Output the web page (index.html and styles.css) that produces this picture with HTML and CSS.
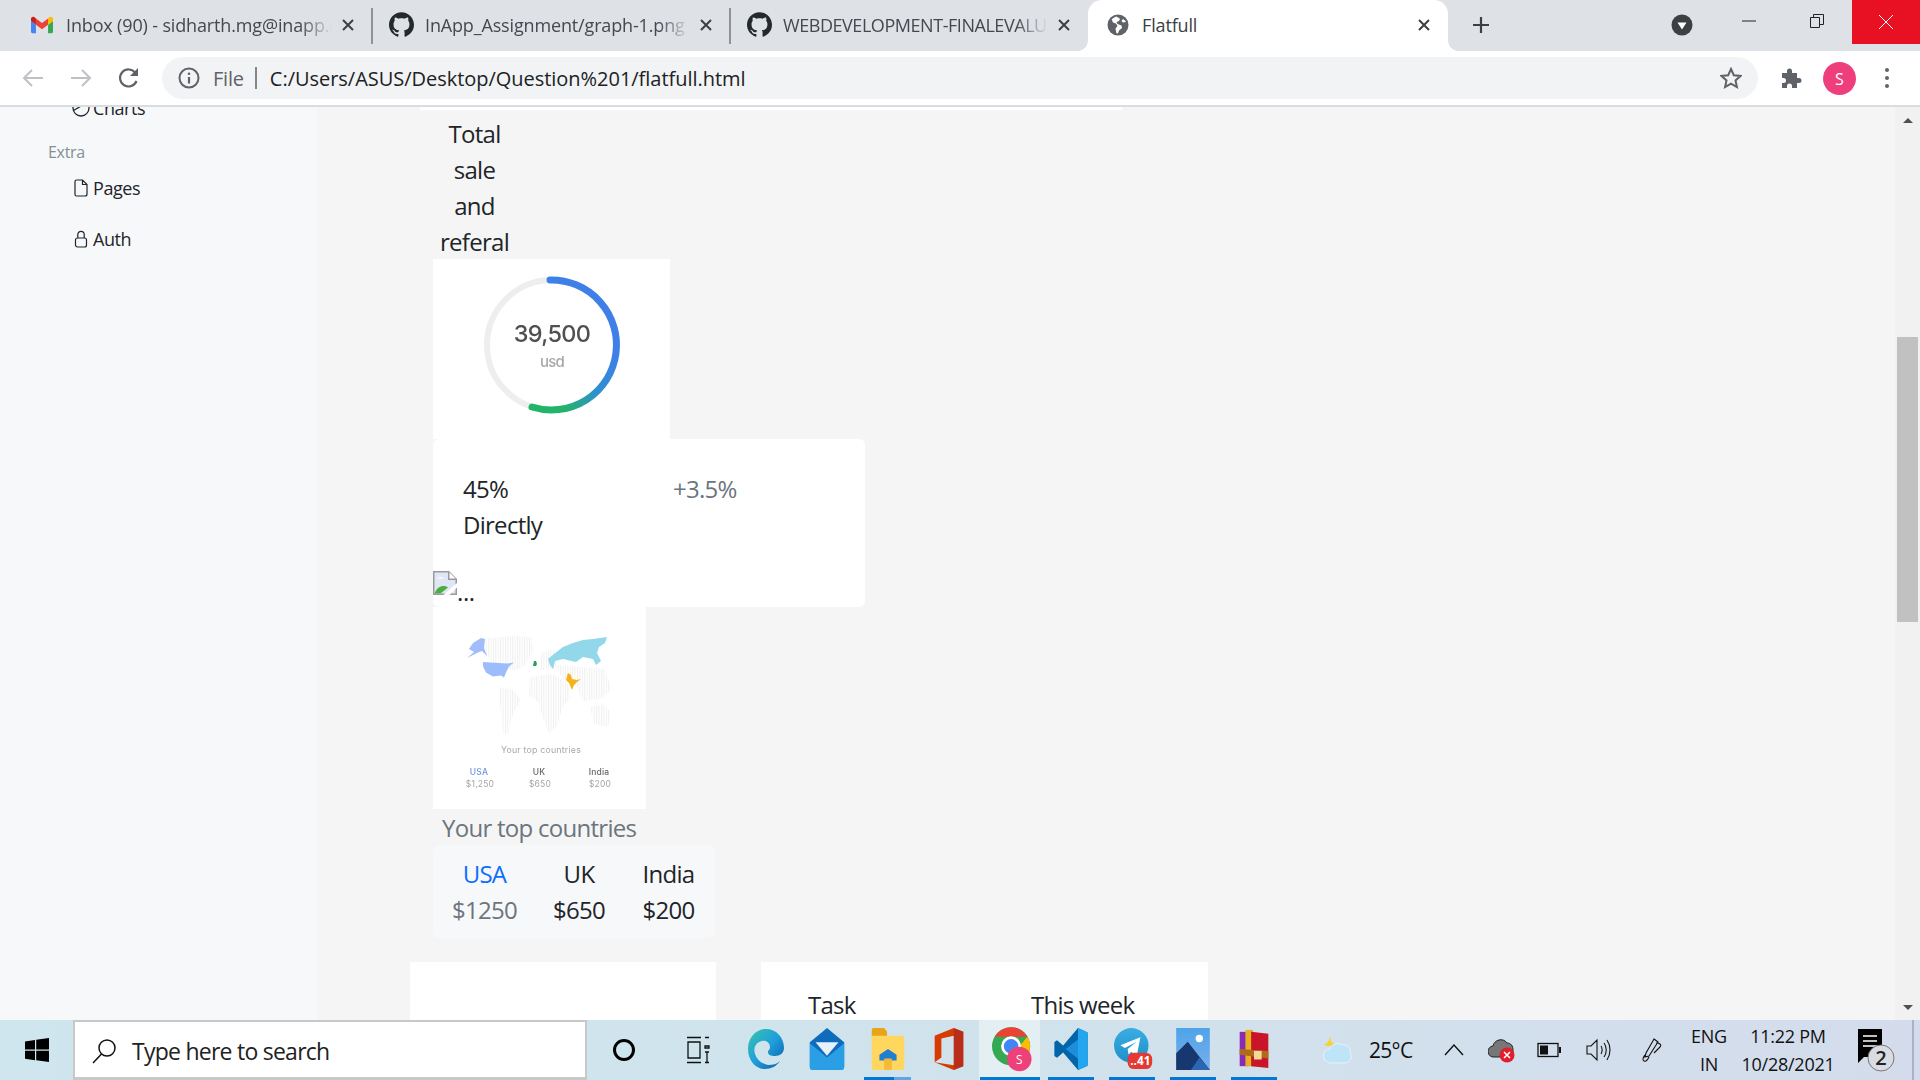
FILE: index.html
```html
<!DOCTYPE html>
<html lang="en">
<head>
<meta charset="utf-8">
<title>Flatfull</title>
<link rel="stylesheet" href="styles.css">
</head>
<body>
<svg class="defs" width="0" height="0" aria-hidden="true">
  <defs>
    <symbol id="gh" viewBox="0 0 24 24"><path fill="#24292e" d="M12 .297c-6.63 0-12 5.373-12 12 0 5.303 3.438 9.8 8.205 11.385.6.113.82-.258.82-.577 0-.285-.01-1.04-.015-2.04-3.338.724-4.042-1.61-4.042-1.61C4.422 18.07 3.633 17.7 3.633 17.7c-1.087-.744.084-.729.084-.729 1.205.084 1.838 1.236 1.838 1.236 1.07 1.835 2.809 1.305 3.495.998.108-.776.417-1.305.76-1.605-2.665-.3-5.466-1.332-5.466-5.93 0-1.31.465-2.38 1.235-3.22-.135-.303-.54-1.523.105-3.176 0 0 1.005-.322 3.3 1.23.96-.267 1.98-.399 3-.405 1.02.006 2.04.138 3 .405 2.28-1.552 3.285-1.23 3.285-1.23.645 1.653.24 2.873.12 3.176.765.84 1.23 1.91 1.23 3.22 0 4.61-2.805 5.625-5.475 5.92.42.36.81 1.096.81 2.22 0 1.606-.015 2.896-.015 3.286 0 .315.21.69.825.57C20.565 22.092 24 17.592 24 12.297c0-6.627-5.373-12-12-12"/></symbol>
    <symbol id="x" viewBox="0 0 14 14"><path d="M2 2l10 10M12 2L2 12" stroke="#3c4043" stroke-width="2" fill="none"/></symbol>
    <pattern id="hatch" width="2.4" height="4" patternUnits="userSpaceOnUse"><rect width="1" height="4" fill="#efefef"/></pattern>
    <linearGradient id="ring" gradientUnits="userSpaceOnUse" x1="180" y1="95" x2="110" y2="150"><stop offset="0" stop-color="#3f80e8"/><stop offset=".4" stop-color="#2e8fd0"/><stop offset=".8" stop-color="#23b36c"/><stop offset="1" stop-color="#22b56a"/></linearGradient>
    <linearGradient id="edge" x1="0" y1="0" x2="1" y2="1"><stop offset="0" stop-color="#38c6a8"/><stop offset=".5" stop-color="#1f9fdc"/><stop offset="1" stop-color="#0c59a4"/></linearGradient>
    <linearGradient id="tg" x1="0" y1="0" x2="0" y2="1"><stop offset="0" stop-color="#39aee3"/><stop offset="1" stop-color="#1f8fc9"/></linearGradient>
    <linearGradient id="ph" x1="0" y1="0" x2="0" y2="1"><stop offset="0" stop-color="#4ea4ea"/><stop offset="1" stop-color="#7aaeea"/></linearGradient>
  </defs>
</svg>

<div class="window">
  <header class="tabstrip">
    <div class="tab">
      <svg class="fav" viewBox="0 0 24 18"><path fill="#4285f4" d="M1.6 18H5.4V8.8L0 4.7v11.7C0 17.3.7 18 1.6 18z"/><path fill="#34a853" d="M18.6 18h3.8c.9 0 1.6-.7 1.6-1.6V4.7l-5.4 4.1z"/><path fill="#fbbc04" d="M18.6 1.8v7L24 4.7V2.5c0-2-2.300-3.200-3.900-2z"/><path fill="#ea4335" d="M5.400 8.800v-7L12 6.800l6.600-5v7L12 13.700z"/><path fill="#c5221f" d="M0 2.500v2.200l5.400 4.100v-7L3.900.6C2.300-.6 0 .5 0 2.500z"/></svg>
      <span class="title">Inbox (90) - sidharth.mg@inapp.co</span>
      <svg class="close"><use href="#x"/></svg>
    </div>
    <i class="tabsep"></i>
    <div class="tab">
      <svg class="fav gh"><use href="#gh"/></svg>
      <span class="title">InApp_Assignment/graph-1.png at main</span>
      <svg class="close"><use href="#x"/></svg>
    </div>
    <i class="tabsep"></i>
    <div class="tab">
      <svg class="fav gh"><use href="#gh"/></svg>
      <span class="title caps">WEBDEVELOPMENT-FINALEVALUATION</span>
      <svg class="close"><use href="#x"/></svg>
    </div>
    <div class="tab active">
      <svg class="fav globe" viewBox="0 0 22 22"><circle cx="11" cy="11" r="10.500" fill="#5f6368"/><path fill="#fff" d="M9.500 2.500c-2 .5-3.500 1.500-4.800 3l1.300 3 3 1 1.500 2.500-2 2.500.8 4.500 1.700.5 1-3 3-2.500-.5-2.500-4-1.500-1-2 2.500-1 1-2.300zM16 5l-1.500 2 1.500 1.500 3-.5c-.7-1.200-1.700-2.200-3-3z"/></svg>
      <span class="title">Flatfull</span>
      <svg class="close"><use href="#x"/></svg>
    </div>
    <div class="newtab"><svg viewBox="0 0 18 18"><path d="M9 1v16M1 9h16" stroke="#3c4043" stroke-width="2.200" fill="none"/></svg></div>
    <div class="strip-space"></div>
    <div class="search-tabs"><svg viewBox="0 0 22 22"><circle cx="11" cy="11" r="10.500" fill="#3c4043"/><path d="M6.500 8.500h9L11 15.500z" fill="#fff"/></svg></div>
    <div class="winbtn"><svg viewBox="0 0 16 16"><path d="M1 8h14" stroke="#222" fill="none"/></svg></div>
    <div class="winbtn"><svg viewBox="0 0 16 16"><path d="M1.500 4.500h9v10h-9zM4.500 4.500v-3h10v10h-4" stroke="#222" fill="none"/></svg></div>
    <div class="winbtn winclose"><svg viewBox="0 0 16 16"><path d="M1 1l14 14M15 1L1 15" stroke="#fff" fill="none"/></svg></div>
  </header>

  <nav class="toolbar">
    <div class="navbtn"><svg viewBox="0 0 22 22"><path d="M21 11H2M10 3l-8 8 8 8" stroke="#bdc1c6" stroke-width="2" fill="none"/></svg></div>
    <div class="navbtn"><svg viewBox="0 0 22 22"><path d="M1 11h19M12 3l8 8-8 8" stroke="#bdc1c6" stroke-width="2" fill="none"/></svg></div>
    <div class="navbtn"><svg viewBox="0 0 22 22"><path d="M18.500 14a8.500 8.500 0 1 1-1.200-8.200" stroke="#5f6368" stroke-width="2.200" fill="none"/><path d="M20 1v8h-8z" fill="#5f6368"/></svg></div>
    <div class="omnibox">
      <svg class="info" viewBox="0 0 22 22"><circle cx="11" cy="11" r="9.500" stroke="#5f6368" stroke-width="2" fill="none"/><path d="M11 10v6.500" stroke="#5f6368" stroke-width="2.200"/><circle cx="11" cy="6.800" r="1.300" fill="#5f6368"/></svg>
      <span class="scheme">File</span>
      <i class="omnisep"></i>
      <span class="url">C:/Users/ASUS/Desktop/Question%201/flatfull.html</span>
      <svg class="star" viewBox="0 0 22 22"><path d="M11 2l2.800 6.200 6.700.7-5 4.500 1.400 6.600L11 16.600 5.100 20l1.400-6.600-5-4.500 6.700-.7z" stroke="#5f6368" stroke-width="2" fill="none"/></svg>
    </div>
    <div class="extbtn"><svg viewBox="0 0 22 22"><path fill="#5f6368" d="M2 6h5V4a2.500 2.500 0 0 1 5 0v2h5v5h2a2.500 2.500 0 0 1 0 5h-2v5H12v-2a2.500 2.500 0 0 0-5 0v2H2v-5h1.500a2.500 2.500 0 0 0 0-5H2z"/></svg></div>
    <div class="avatar">S</div>
    <div class="menubtn"><i></i><i></i><i></i></div>
  </nav>

  <div class="viewport">
    <aside class="sidebar">
      <div class="side-item side-charts">
        <svg class="side-ico wide" viewBox="0 0 18 18"><circle cx="9" cy="9" r="8" stroke="#212529" stroke-width="1.300" fill="none"/><path d="M1.500 11.500L15 3.500" stroke="#212529" stroke-width="1.300"/></svg>
        <span>Charts</span>
      </div>
      <div class="side-head">Extra</div>
      <div class="side-item">
        <svg class="side-ico" viewBox="0 0 14 18"><path d="M2.500 1h6l4.500 4.500V15a2 2 0 0 1-2 2H2.500a1.500 1.500 0 0 1-1.500-1.500v-13A1.500 1.500 0 0 1 2.500 1zM8.500 1v4.500H13" stroke="#212529" stroke-width="1.200" fill="none"/></svg>
        <span>Pages</span>
      </div>
      <div class="side-item">
        <svg class="side-ico" viewBox="0 0 14 18"><rect x="1.500" y="8" width="11" height="9" rx="2" stroke="#212529" stroke-width="1.200" fill="none"/><path d="M3.800 8V4.500a3.200 3.200 0 0 1 6.400 0V8" stroke="#212529" stroke-width="1.200" fill="none"/></svg>
        <span>Auth</span>
      </div>
    </aside>

    <main class="main">
      <div class="strip-card"></div>
      <div class="heading">Total sale and referal</div>

      <svg class="donut" viewBox="0 0 237 180">
        <rect width="237" height="180" fill="#fff"/>
        <circle cx="119" cy="86" r="65" fill="none" stroke="#eeeeee" stroke-width="6"/>
        <path d="M117 21A65 65 0 1 1 99 148" fill="none" stroke="url(#ring)" stroke-width="7" stroke-linecap="round"/>
        <text class="donut-num" x="119" y="83" text-anchor="middle">39,500</text>
        <text class="donut-sub" x="119" y="108" text-anchor="middle">usd</text>
      </svg>

      <section class="stat-card">
        <div class="stat-row">
          <div class="stat-col">45%<br>Directly</div>
          <div class="stat-delta">+3.5%</div>
        </div>
        <div class="broken">
          <svg class="broken-ico" viewBox="0 0 16 16"><path d="M.5.500h10l5 5v10H.500z" fill="#dfe7f7" stroke="#9a9a9a"/><path d="M10.500.500v5h5" fill="#fff" stroke="#9a9a9a"/><path d="M1 15c2-5 6-6 9-4l-5 4z" fill="#4caf3d"/><path d="M3 5a2 1 0 0 1 4 0z" fill="#fff"/><path d="M7 16L16 8v3l-5 5z" fill="#fff"/></svg><span class="alt">...</span>
        </div>
      </section>

      <svg class="map" viewBox="0 0 213 202">
        <rect width="213" height="202" fill="#fff"/>
        <g fill="url(#hatch)">
          <path d="M50 32l30-3 18 1 2 14-8 14-10 6-20-6-12-14z"/>
          <path d="M66 80l14 3 8 10-8 14-5 18-4 4-3-22z"/>
          <path d="M97 70l22-3 16 10 3 14-8 8-6 20-8 7-6-14-4-16-10-8z"/>
          <path d="M108 46l12-4 6 10-4 10-14 1z"/>
          <path d="M122 58l50 4 6 20-10 10-18 2-6-14-14-8z"/>
          <path d="M157 100l14-3 6 8-2 15-14-3z"/>
        </g>
        <path d="M40 36l8-5 4 1-1 9 3 8-5-5-5 2-10 5 7-6-5-3z" fill="#a1bdfb"/>
        <path d="M50 55l16 1 8 .5 7-1-5 4-3 6-2 5-3-2-8 1-7-4-3-6z" fill="#9dbcfb"/>
        <path d="M115 52l6-5 9-7 10-4 10-3 10-1 14-2-2 6-6 4-2 6 4 8-5 4-3-6-10-2-7 5-13-3-8 2-2 8-3-4z" fill="#93d7ea"/>
        <path d="M101 54h2l1 3-1 2h-3z" fill="#2a9e5c"/>
        <path d="M135 66l3 2 1 4 5 1 4-1-4 3-3 3-2 5-3-7-3-3z" fill="#f6b21b"/>
        <text class="map-cap" x="108" y="146" text-anchor="middle">Your top countries</text>
        <text class="map-usa" x="46" y="168" text-anchor="middle">USA</text>
        <text class="map-c" x="106" y="168" text-anchor="middle">UK</text>
        <text class="map-c" x="166" y="168" text-anchor="middle">India</text>
        <text class="map-v" x="47" y="180" text-anchor="middle">$1,250</text>
        <text class="map-v" x="107" y="180" text-anchor="middle">$650</text>
        <text class="map-v" x="167" y="180" text-anchor="middle">$200</text>
      </svg>

      <div class="caption">Your top countries</div>
      <div class="countries">
        <span class="usa">USA</span><span>UK</span><span>India</span>
        <span class="muted">$1250</span><span>$650</span><span>$200</span>
      </div>

      <div class="bottom-cards">
        <div class="bcard first"></div>
        <div class="bcard second"><span>Task</span><span>This week</span></div>
      </div>
    </main>

    <div class="scrollbar">
      <i class="arrow up"></i>
      <i class="thumb"></i>
      <i class="arrow down"></i>
    </div>
  </div>

  <footer class="taskbar">
    <div class="start"><svg viewBox="0 0 24 24"><path fill="#000" d="M0 3.400l10-1.400v9.500H0zM11.200 1.800L24 0v11.500H11.200zM0 12.700h10v9.500L0 20.800zM11.200 12.700H24V24l-12.800-1.800z"/></svg></div>
    <div class="searchbox">
      <svg viewBox="0 0 26 26"><circle cx="16" cy="10" r="8" stroke="#111" stroke-width="1.500" fill="none"/><path d="M10.500 16L2 25" stroke="#111" stroke-width="1.500"/></svg>
      <span>Type here to search</span>
    </div>
    <div class="cortana"><svg viewBox="0 0 24 24"><circle cx="12" cy="12" r="9.500" stroke="#000" stroke-width="3" fill="none"/></svg></div>
    <div class="taskview"><svg viewBox="0 0 24 28"><path d="M1 1.500h14M1 26.500h14M2 6h12v16H2zM19 1.500h4M19 10h4v2h-4zM19 16h4M19 26.500h4M21 16v10" stroke="#111" stroke-width="1.300" fill="none"/></svg></div>

    <div class="slot"><svg viewBox="0 0 36 40"><path fill="url(#edge)" d="M18 0C28 0 36 8 36 19c0 5-4 8-9 8-4 0-7-1-7-4 0-2 2-2 2-5 0-4-4-7-8-6-6 1-9 7-7 13 2 6 7 10 13 11 5 0 9-1 12-4-3 5-9 8-15 8C7 40 0 31 0 20 0 9 8 0 18 0z"/></svg></div>
    <div class="slot"><svg viewBox="0 0 36 44"><path fill="#0f6cbd" d="M0 15L18 0l18 15v25a3 3 0 0 1-3 3H3a3 3 0 0 1-3-3z"/><path fill="#e8f1fa" d="M6 15h24L18 29z"/><path fill="#2a9fe6" d="M0 16l18 15 18-15v25a3 3 0 0 1-3 3H3a3 3 0 0 1-3-3z"/></svg></div>
    <div class="slot running-light"><svg viewBox="0 0 34 44"><path fill="#e8a317" d="M2 0h11l3 4v6H0V2a2 2 0 0 1 2-2z"/><path fill="#ffd75e" d="M0 8h31a3 3 0 0 1 3 3v30a3 3 0 0 1-3 3H3a3 3 0 0 1-3-3z"/><path fill="#1f7fd1" d="M8 28l9-6 9 6v6H8z"/><path fill="#f5b93a" d="M13 32h8v12h-8z"/></svg></div>
    <div class="slot"><svg viewBox="0 0 30 44"><path fill="#d83b01" d="M0 8L20 0l10 4v36l-10 4L0 36l20 3V8L7 11v20l-7 5z"/><path fill="#a4262c" d="M20 0l10 4v36l-10 4z" opacity=".6"/></svg></div>
    <div class="slot running-active chrome-slot">
      <svg viewBox="0 0 44 50"><circle cx="21" cy="22" r="21" fill="#34a853"/><path d="M21 1a21 21 0 0 1 18 10.500H21z M3 11.500A21 21 0 0 1 21 1v10.500z" fill="#ea4335"/><path d="M39 11.500a21 21 0 0 1-18 31.500l9-21z" fill="#fbbc04"/><circle cx="21" cy="22" r="9.500" fill="#4285f4" stroke="#fff" stroke-width="3"/><circle cx="30" cy="36" r="13.500" fill="#ee4079"/><text class="chrome-s" x="30" y="41" text-anchor="middle">S</text></svg>
    </div>
    <div class="slot running"><svg viewBox="0 0 38 48"><path fill="#0065a9" d="M27 0L10 20 3 14 0 16v16l3 2 7-6 17 20 11-5V5z"/><path fill="#23a6f0" d="M27 0l11 5v38l-11 5z"/><path fill="#1b8fdb" d="M27 13v22L13 24z"/></svg></div>
    <div class="slot running tg-slot">
      <svg viewBox="0 0 44 48"><circle cx="19" cy="20" r="19" fill="url(#tg)"/><path d="M7 20l22-9-4 21-6-5-3 3-1-6 10-8-13 7z" fill="#fff"/><rect x="15" y="28" width="27" height="18" rx="7" fill="#e53935"/><text class="tg-num" x="29" y="42" text-anchor="middle">..41</text></svg>
    </div>
    <div class="slot running"><svg viewBox="0 0 32 40"><rect width="32" height="40" fill="url(#ph)"/><circle cx="22" cy="10" r="3.500" fill="#fff"/><path d="M0 40V24l11-11 21 27z" fill="#17376f"/><path d="M14 40l8-12 10 12z" fill="#2a66b3"/></svg></div>
    <div class="slot running"><svg viewBox="0 0 34 44"><path fill="#8a2bb8" d="M2 4h9v36H2z"/><path fill="#e6b31e" d="M8 2h8v38H8z"/><path fill="#c9142a" d="M14 4l18 2v36l-18-2z"/><path fill="#b06a1a" d="M2 22l30 2v8L2 28z"/><rect x="17" y="24" width="8" height="9" fill="#f5d99a"/></svg></div>

    <div class="tb-gap"></div>
    <div class="tray weather"><svg viewBox="0 0 32 32"><path d="M9 1c-1 4 0 8 4 9-2 2-7 3-11 1 4-2 6-6 7-10z" fill="#f7d234"/><path d="M9 29a7 7 0 0 1-1-14c1-5 8-7 12-4 5-1 9 3 8 8 3 4 0 10-5 10z" fill="#bfe3f7" stroke="#e8f4fb"/></svg></div>
    <div class="tray temp">25°C</div>
    <div class="tray chevron"><svg viewBox="0 0 20 12"><path d="M1 11l9-10 9 10" stroke="#111" stroke-width="1.400" fill="none"/></svg></div>
    <div class="tray cloud"><svg viewBox="0 0 28 26"><path d="M6 20a5.500 5.500 0 0 1-1-11c1-6 10-9 14-3 4 0 6 3 6 7v7z" fill="#777" stroke="#222"/><circle cx="19" cy="18" r="7.500" fill="#e01f2d"/><path d="M16 15l6 6M22 15l-6 6" stroke="#fff" stroke-width="1.500"/></svg></div>
    <div class="tray battery"><svg viewBox="0 0 24 16"><rect x="1" y="1.500" width="20" height="13" fill="none" stroke="#111" stroke-width="1.300"/><rect x="3" y="3.500" width="8" height="9" fill="#111"/><rect x="22" y="5" width="2" height="6" fill="#111"/></svg></div>
    <div class="tray volume"><svg viewBox="0 0 26 26"><path d="M2 9h4l6-6v20l-6-6H2zM16 9c1.500 2 1.500 6 0 8M19 6c3 4 3 10 0 14M22 3c4 6 4 14 0 20" stroke="#111" stroke-width="1.100" fill="none"/></svg></div>
    <div class="tray pen"><svg viewBox="0 0 24 26"><path d="M14 2l4 3-9 14-4 1 1-4zM6 17c-3 3-4 6-2 7s4-2 5-4M16 6c4 0 6 2 4 4l-6 6" stroke="#111" stroke-width="1.100" fill="none"/></svg></div>
    <div class="tray lang"><span>ENG</span><span>IN</span></div>
    <div class="tray clock"><span>11:22 PM</span><span>10/28/2021</span></div>
    <div class="tray notify">
      <svg viewBox="0 0 40 46"><path d="M2 2h24v28H8l-6 6z" fill="#000"/><path d="M7 9h14M7 14h14M7 19h14" stroke="#fff" stroke-width="1.500"/><circle cx="25" cy="31" r="13" fill="#d9dde3" stroke="#777"/><text class="notify-num" x="25" y="38" text-anchor="middle">2</text></svg>
    </div>
    <div class="tb-edge"></div>
  </footer>
</div>
</body>
</html>
```
FILE: styles.css
```css
* { box-sizing: border-box; }
html, body { margin: 0; padding: 0; height: 100%; overflow: hidden; }
body { font-family: "Open Sans", "Noto Sans", sans-serif; color: #212529; }
.defs { display: block; height: 0; width: 0; }
.window { width: 1920px; height: 1080px; display: flex; flex-direction: column; overflow: hidden; }
i { display: block; font-style: normal; }

/* tab strip */
.tabstrip { height: 51px; flex: none; background: #dee1e6; display: flex; align-items: stretch; padding-left: 14px; }
.tab { width: 358px; display: flex; align-items: center; padding: 0 17px 2px; flex: none; }
.tabsep { width: 2px; height: 36px; background: #8f9296; margin: 8px -1px 0; flex: none; align-self: flex-start; }
.fav { width: 22px; height: 18px; margin: 0 13px 0 0; flex: none; }
.fav.gh { width: 25px; height: 25px; margin-right: 11px; }
.fav.globe { width: 22px; height: 22px; margin: 0 13px 0 2px; }
.title { flex: 1; min-width: 0; font-size: 18px; letter-spacing: -.15px; color: #45494e; white-space: nowrap; overflow: hidden; -webkit-mask-image: linear-gradient(90deg, #000 88%, transparent 100%); mask-image: linear-gradient(90deg, #000 88%, transparent 100%); }
.title.caps { letter-spacing: -.45px; }
.close { width: 14px; height: 14px; margin-left: 9px; flex: none; }
.tab.active { position: relative; width: 360px; background: #fff; border-radius: 14px 14px 0 0; }
.tab.active::before, .tab.active::after { content: ""; position: absolute; bottom: 0; width: 10px; height: 10px; }
.tab.active::before { left: -10px; background: radial-gradient(circle at 0 0, transparent 9.5px, #fff 10px); }
.tab.active::after { right: -10px; background: radial-gradient(circle at 100% 0, transparent 9.5px, #fff 10px); }
.tab.active .title { color: #3c4043; -webkit-mask-image: none; mask-image: none; }
.newtab { width: 65px; display: flex; align-items: center; justify-content: center; padding-bottom: 1px; }
.newtab svg { width: 18px; height: 18px; }
.strip-space { flex: 1; }
.search-tabs { width: 42px; margin-right: 13px; display: flex; align-items: center; justify-content: center; padding-bottom: 1px; }
.search-tabs svg { width: 22px; height: 22px; }
.winbtn { width: 68px; height: 44px; display: flex; align-items: center; justify-content: center; padding-right: 2px; }
.winbtn svg { width: 16px; height: 16px; margin-bottom: 2px; }
.winclose { background: #e81123; padding-right: 0; }
.winclose svg { margin-bottom: 0; }

/* toolbar */
.toolbar { height: 56px; flex: none; background: #fff; border-bottom: 2px solid #dadce0; display: flex; align-items: flex-start; padding: 6px 0 0 9px; }
.navbtn { width: 48px; height: 42px; display: flex; align-items: center; justify-content: center; flex: none; }
.navbtn svg { width: 22px; height: 22px; }
.omnibox { width: 1596px; height: 42px; margin-left: 9px; background: #f1f3f4; border-radius: 21px; display: flex; align-items: center; padding: 0 16px 0 16px; flex: none; }
.info { width: 22px; height: 22px; flex: none; }
.scheme { font-size: 20px; letter-spacing: -.2px; color: #5f6368; margin-left: 13px; }
.omnisep { width: 2px; height: 22px; background: #80868b; margin: 0 13px 0 11px; }
.url { font-size: 20px; letter-spacing: -.03px; color: #202124; }
.star { width: 22px; height: 22px; margin-left: auto; }
.extbtn { width: 46px; height: 42px; margin-left: 10px; display: flex; align-items: center; justify-content: center; flex: none; }
.extbtn svg { width: 22px; height: 22px; }
.avatar { width: 33px; height: 33px; margin: 5px 0 0 9px; border-radius: 50%; background: #ee3e7b; color: #fff; font-size: 16px; display: flex; align-items: center; justify-content: center; flex: none; }
.menubtn { width: 47px; height: 42px; display: flex; flex-direction: column; align-items: center; justify-content: center; gap: 4px; margin-left: 7px; flex: none; }
.menubtn i { width: 4px; height: 4px; border-radius: 50%; background: #5f6368; }

/* page */
.viewport { flex: 1; min-height: 0; display: flex; overflow: hidden; background: #f5f5f5; }
.sidebar { width: 317px; flex: none; background: #f7f8fa; font-size: 18px; overflow: hidden; }
.side-item { display: flex; align-items: center; height: 36px; padding-left: 74px; margin-bottom: 15px; letter-spacing: -.45px; color: #212529; }
.side-charts { margin-top: -17px; padding-left: 72px; margin-bottom: 0; }
.side-ico { width: 14px; height: 18px; margin-right: 5px; flex: none; }
.side-ico.wide { width: 18px; margin-right: 3px; }
.side-head { padding-left: 48px; font-size: 16px; letter-spacing: -.3px; color: #868e96; height: 26px; line-height: 26px; margin: 13px 0 5px; }
.main { flex: 1; min-width: 0; overflow: hidden; font-size: 24px; letter-spacing: -.72px; line-height: 36px; }
.strip-card { width: 702px; height: 3px; margin-left: 103px; background: #fff; }
.heading { width: min-content; text-align: center; margin: 6px 0 -1px 123px; }
.donut { display: block; width: 237px; height: 180px; margin-left: 116px; filter: blur(.35px); }
.donut-num { font: 500 23.500px Inter, sans-serif; fill: #505050; }
.donut-sub { font: 500 15px Inter, sans-serif; fill: #a8a8a8; }
.stat-card { width: 432px; height: 168px; margin-left: 116px; background: #fff; border-radius: 6px; padding-top: 32px; }
.stat-row { display: flex; padding-left: 30px; }
.stat-col { width: 210px; }
.stat-delta { color: #6c757d; }
.broken { display: flex; align-items: flex-end; height: 32px; margin-top: 28px; }
.broken-ico { width: 24px; height: 24px; margin-bottom: 8px; flex: none; }
.alt { line-height: 28px; font-size: 24px; letter-spacing: -.4px; margin-bottom: -3px; }
.map { display: block; width: 213px; height: 202px; margin-left: 116px; filter: blur(.4px); }
.map-cap { font: 400 8.800px Inter, sans-serif; letter-spacing: .2px; fill: #a8a8a8; }
.map-usa { font: 500 8.500px Inter, sans-serif; letter-spacing: .2px; fill: #6e96dc; }
.map-c { font: 500 8.500px Inter, sans-serif; letter-spacing: .2px; fill: #666; }
.map-v { font: 400 8.500px Inter, sans-serif; letter-spacing: .2px; fill: #a5a5a5; }
.caption { color: #6c757d; margin: 1px 0 -1px 125px; }
.countries { width: 282px; margin-left: 116px; padding: 11px 0 10px; display: grid; grid-template-columns: 103px 86px 93px; text-align: center; background: #f7f8fa; border-radius: 6px; }
.usa { color: #0d6efd; }
.muted { color: #6c757d; }
.bottom-cards { display: flex; margin: 24px 0 0 93px; }
.bcard { height: 220px; background: #fff; flex: none; }
.first { width: 306px; }
.second { width: 447px; margin-left: 45px; padding: 25px 0 0 47px; display: grid; grid-template-columns: 223px 1fr; align-content: start; }

/* scrollbar */
.scrollbar { width: 25px; flex: none; background: #f1f1f1; display: flex; flex-direction: column; align-items: center; padding-top: 11px; }
.arrow { width: 0; height: 0; border-left: 5px solid transparent; border-right: 5px solid transparent; flex: none; }
.arrow.up { border-bottom: 5px solid #505050; }
.thumb { width: 21px; height: 285px; background: #c1c1c1; margin: 214px 0 383px; flex: none; }
.arrow.down { border-top: 5px solid #505050; }

/* taskbar */
.taskbar { height: 60px; flex: none; background: linear-gradient(90deg, #cfe6ee 0%, #d0e3ec 50%, #d4dcec 100%); display: flex; align-items: center; color: #111; }
.start { width: 73px; height: 100%; display: flex; align-items: center; justify-content: center; }
.start svg { width: 24px; height: 24px; }
.searchbox { width: 514px; height: 100%; background: #fff; border: 2px solid #c8c8c8; border-bottom-width: 3px; display: flex; align-items: center; padding: 2px 0 0 16px; }
.searchbox svg { width: 26px; height: 26px; margin-right: 15px; }
.searchbox span { font-size: 23px; letter-spacing: -.75px; color: #222; }
.cortana { width: 73px; display: flex; justify-content: center; }
.cortana svg { width: 24px; height: 24px; }
.taskview { width: 75px; display: flex; justify-content: center; }
.taskview svg { width: 24px; height: 28px; }
.slot { width: 61px; height: 60px; flex: none; display: flex; align-items: center; justify-content: center; padding-bottom: 2px; }
.slot svg { width: 36px; height: 42px; }
.running { background: linear-gradient(#0078d7, #0078d7) center bottom / 46px 3px no-repeat; }
.running-light { background: linear-gradient(90deg, #0078d7 0 30px, #5fa6e2 30px) center bottom / 47px 3px no-repeat; }
.running-active { background: linear-gradient(#0078d7, #0078d7) center bottom / 60px 3px no-repeat, #e4eff3; }
.chrome-slot svg { width: 40px; height: 46px; margin-left: 4px; }
.slot.tg-slot svg { width: 40px; height: 46px; margin-left: 4px; }
.chrome-s { font: 500 13px "Open Sans", sans-serif; fill: #fff; }
.tg-num { font: 700 13px "Open Sans", sans-serif; fill: #fff; }
.tb-gap { width: 30px; flex: none; }
.tray { height: 100%; flex: none; display: flex; align-items: center; justify-content: center; }
.weather { width: 48px; }
.weather svg { width: 32px; height: 32px; }
.temp { width: 70px; justify-content: flex-start; padding-left: 7px; font-size: 21px; letter-spacing: -.7px; }
.chevron { width: 44px; }
.chevron svg { width: 20px; height: 12px; }
.cloud { width: 52px; }
.cloud svg { width: 28px; height: 26px; }
.battery { width: 42px; }
.battery svg { width: 24px; height: 16px; }
.volume { width: 56px; }
.volume svg { width: 26px; height: 26px; }
.pen { width: 52px; }
.pen svg { width: 24px; height: 26px; }
.lang, .clock { flex-direction: column; gap: 0; font-size: 18px; letter-spacing: -.25px; line-height: 28px; }
.lang { width: 62px; }
.clock { width: 96px; }
.notify { width: 76px; justify-content: flex-start; padding-left: 20px; }
.notify svg { width: 40px; height: 46px; }
.notify-num { font: 600 20px "Open Sans", sans-serif; fill: #222; }
.tb-edge { width: 2px; height: 100%; background: #a9b3c8; flex: none; }
```
